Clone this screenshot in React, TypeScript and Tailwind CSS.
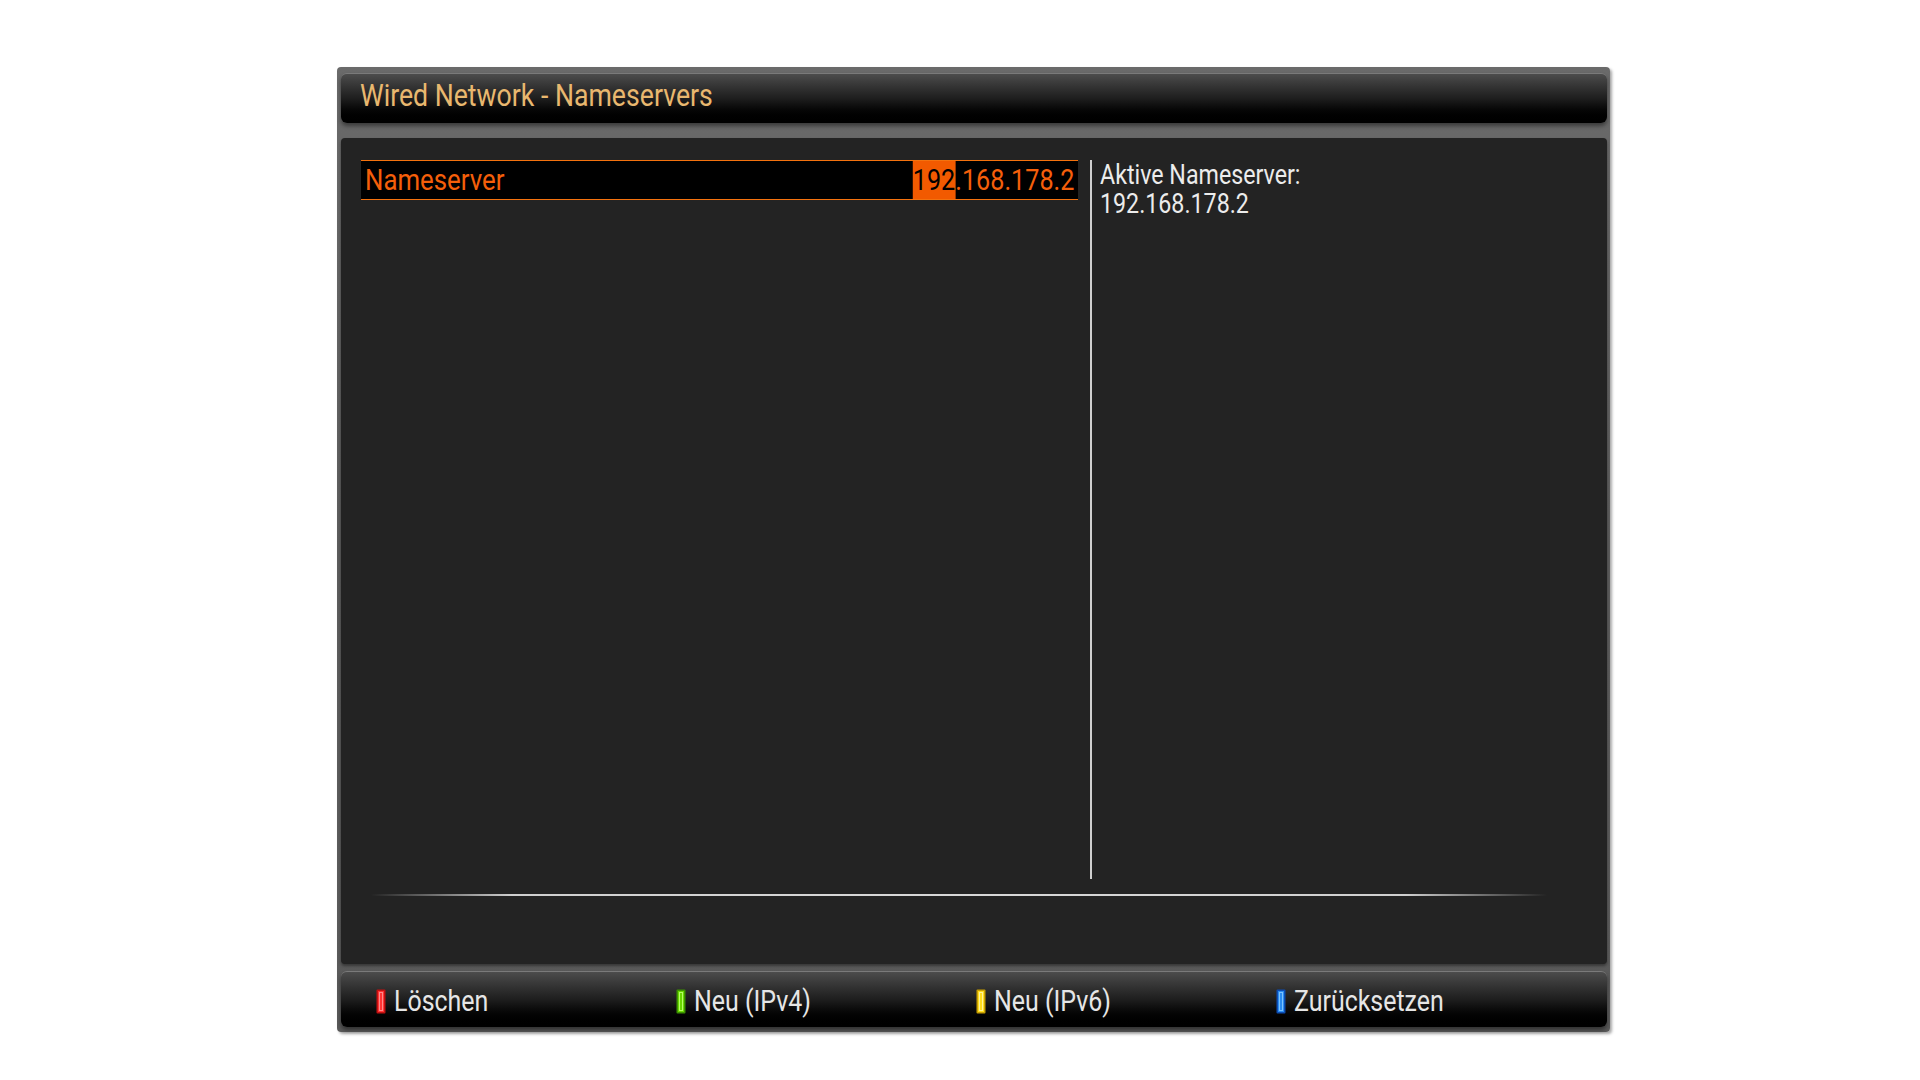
import React from "react";

function KeyIcon({ outer, fill, inner }: { outer: string; fill: string; inner: string }) {
  return (
    <svg width="10" height="25" viewBox="0 0 10 25" className="shrink-0">
      <rect x="0.5" y="0.5" width="9" height="24" rx="1" fill={outer} />
      <rect x="2" y="2" width="6" height="21" fill={fill} />
      <rect x="3.5" y="3.5" width="3" height="18" fill="none" stroke={inner} strokeWidth="1" />
    </svg>
  );
}

const keys = [
  { label: "Löschen", outer: "#c41010", fill: "#ff3434", inner: "#ff8a8a" },
  { label: "Neu (IPv4)", outer: "#3c9400", fill: "#6ad600", inner: "#b4ff66" },
  { label: "Neu (IPv6)", outer: "#c9a000", fill: "#ffdd1e", inner: "#fff49a" },
  { label: "Zurücksetzen", outer: "#0c4cb4", fill: "#2a8cf0", inner: "#7cc2ff" },
];

export default function App() {
  return (
    <div className="w-[1920px] h-[1080px] bg-white pt-[67px] pl-[337px] font-[Roboto,sans-serif] overflow-hidden">
      <div className="w-[1273px] h-[965px] bg-gradient-to-b from-[#6a6a6a] via-[#5c5c5c] to-[#5a5a5a] rounded-[4px] pl-[4px] pr-[3px] pt-[6px] flex flex-col shadow-[2px_2px_3px_rgba(0,0,0,0.35)]">
        {/* Title bar */}
        <div className="h-[50px] rounded-[6px] bg-gradient-to-b from-[#4c4c4c] via-[#1e1e1e] to-[#000000] border-t border-[#7a7a7a] shadow-[0_3px_4px_rgba(0,0,0,0.45)] flex items-center pl-[19px] pb-[7px]">
          <span className="inline-block origin-left scale-x-[0.86] text-[31px] leading-none text-[#e9b86f] whitespace-nowrap">
            Wired Network - Nameservers
          </span>
        </div>

        {/* Body */}
        <div className="mt-[15px] h-[826px] bg-[#232323] rounded-[4px] shadow-[0_2px_3px_rgba(0,0,0,0.4)] flex flex-col">
          <div className="flex pl-[20px] pt-[22px] h-[741px]">
            <div className="w-[717px]">
              <div className="h-[40px] bg-black border-y border-[#f4720e] flex items-stretch justify-between">
                <div className="flex items-center pl-[4px]">
                  <span className="inline-block origin-left scale-x-[0.86] text-[30px] leading-none text-[#f55f0a] whitespace-nowrap">
                    Nameserver
                  </span>
                </div>
                <div className="flex items-stretch pr-[4px]">
                  <div className="flex items-stretch origin-right scale-x-[0.84] text-[30px] leading-none whitespace-nowrap">
                    <span className="flex items-center bg-[#f25a00] text-black">192</span>
                    <span className="flex items-center text-[#f55f0a]">.168.178.2</span>
                  </div>
                </div>
              </div>
            </div>
            <div className="ml-[12px] w-[2px] h-[719px] bg-[#cfcfcf]" />
            <div className="ml-[8px] pt-[1px] flex flex-col">
              <span className="inline-block origin-left scale-x-[0.86] text-[27px] leading-[29px] text-[#ececec] whitespace-nowrap">
                Aktive Nameserver:
              </span>
              <span className="inline-block origin-left scale-x-[0.86] text-[27px] leading-[29px] text-[#ececec] whitespace-nowrap">
                192.168.178.2
              </span>
            </div>
          </div>
          <div className="mt-[15px] ml-[30px] w-[1176px] h-[2px] bg-[linear-gradient(90deg,transparent_0%,#cfcfcf_12%,#d8d8d8_50%,#cfcfcf_88%,transparent_100%)]" />
        </div>

        {/* Footer */}
        <div className="mt-[7px] h-[56px] rounded-[6px] bg-gradient-to-b from-[#4c4c4c] via-[#1e1e1e] to-[#000000] border-t border-[#7a7a7a] shadow-[0_3px_4px_rgba(0,0,0,0.45)] flex items-center pl-[35px] pt-[4px]">
          {keys.map((k) => (
            <div key={k.label} className="w-[300px] flex items-center gap-[8px]">
              <KeyIcon outer={k.outer} fill={k.fill} inner={k.inner} />
              <span className="inline-block origin-left scale-x-[0.86] text-[29px] leading-none text-[#e6e6e6] whitespace-nowrap">
                {k.label}
              </span>
            </div>
          ))}
        </div>
      </div>
    </div>
  );
}
